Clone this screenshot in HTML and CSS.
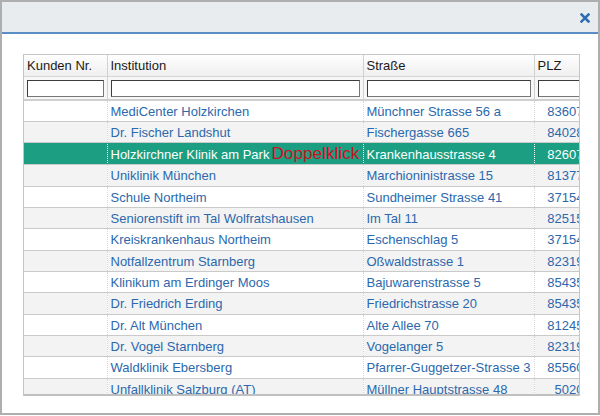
FILE: index.html
```html
<!DOCTYPE html>
<html lang="de">
<head>
<meta charset="utf-8">
<link rel="stylesheet" href="styles.css">
</head>
<body>
<div class="dialog">
  <div class="titlebar">
    <button class="close" aria-label="Schließen">
      <svg width="10" height="10" viewBox="0 0 10 10"><path d="M1.5 1.5L8.5 8.5M8.5 1.5L1.5 8.5" stroke="#2f6db3" stroke-width="2.5" stroke-linecap="square"/></svg>
    </button>
  </div>
  <div class="content">
    <div class="grid">
      <table>
        <colgroup><col class="c1"><col class="c2"><col class="c3"><col class="c4"></colgroup>
        <thead>
          <tr class="head"><th>Kunden Nr.</th><th>Institution</th><th>Straße</th><th>PLZ</th></tr>
          <tr class="filter"><td><input></td><td><input></td><td><input></td><td><input></td></tr>
        </thead>
        <tbody>
          <tr><td></td><td>MediCenter Holzkirchen</td><td>Münchner Strasse 56 a</td><td class="plz">83607</td></tr>
          <tr><td></td><td>Dr. Fischer Landshut</td><td>Fischergasse 665</td><td class="plz">84028</td></tr>
          <tr class="sel"><td></td><td class="inst">Holzkirchner Klinik am Park<span class="hint">Doppelklick</span></td><td>Krankenhausstrasse 4</td><td class="plz">82607</td></tr>
          <tr><td></td><td>Uniklinik München</td><td>Marchioninistrasse 15</td><td class="plz">81377</td></tr>
          <tr><td></td><td>Schule Northeim</td><td>Sundheimer Strasse 41</td><td class="plz">37154</td></tr>
          <tr><td></td><td>Seniorenstift im Tal Wolfratshausen</td><td>Im Tal 11</td><td class="plz">82515</td></tr>
          <tr><td></td><td>Kreiskrankenhaus Northeim</td><td>Eschenschlag 5</td><td class="plz">37154</td></tr>
          <tr><td></td><td>Notfallzentrum Starnberg</td><td>Oßwaldstrasse 1</td><td class="plz">82319</td></tr>
          <tr><td></td><td>Klinikum am Erdinger Moos</td><td>Bajuwarenstrasse 5</td><td class="plz">85435</td></tr>
          <tr><td></td><td>Dr. Friedrich Erding</td><td>Friedrichstrasse 20</td><td class="plz">85435</td></tr>
          <tr><td></td><td>Dr. Alt München</td><td>Alte Allee 70</td><td class="plz">81245</td></tr>
          <tr><td></td><td>Dr. Vogel Starnberg</td><td>Vogelanger 5</td><td class="plz">82319</td></tr>
          <tr><td></td><td>Waldklinik Ebersberg</td><td>Pfarrer-Guggetzer-Strasse 3</td><td class="plz">85560</td></tr>
          <tr><td></td><td>Unfallklinik Salzburg (AT)</td><td>Müllner Hauptstrasse 48</td><td class="plz">5020</td></tr>
        </tbody>
      </table>
    </div>
  </div>
</div>
</body>
</html>
```
FILE: styles.css
```css
html, body {
  margin: 0;
  padding: 0;
  background: #ffffff;
}
body {
  width: 600px;
  height: 416px;
  overflow: hidden;
  font-family: "Liberation Sans", Arial, sans-serif;
}
.dialog {
  box-sizing: border-box;
  width: 600px;
  height: 415px;
  border: 2px solid #aeaeae;
  background: #fff;
}
.titlebar {
  height: 30px;
  background: #e9ecee;
  border-bottom: 2px solid #5a8fc6;
  display: flex;
  justify-content: flex-end;
  align-items: center;
}
.close {
  border: 0;
  background: transparent;
  padding: 0;
  margin: 2px 8px 0 0;
  width: 10px;
  height: 10px;
  display: flex;
}
.content {
  padding: 20px 0 0 21px;
}
.grid {
  width: 555px;
  height: 339px;
  overflow: hidden;
  border: 1px solid #c6c6c6;
  border-bottom: 2px solid #c0c0c0;
}
table {
  table-layout: fixed;
  border-collapse: collapse;
  width: 563px;
  font-size: 13px;
}
.c1 { width: 83px; }
.c2 { width: 256px; }
.c3 { width: 171px; }
.c4 { width: 53px; }
th, td {
  padding: 0 3px;
  white-space: nowrap;
  overflow: hidden;
}
.head th {
  height: 21px;
  text-align: left;
  font-weight: normal;
  color: #1a1a1a;
  background: linear-gradient(#fefefe, #efefef);
  border-right: 1px solid #d2d2d2;
  border-bottom: 1px solid #d6d6d6;
}
.filter td {
  height: 22px;
  padding: 0 3px;
  background: #f7f7f7;
  border-right: 1px solid #d2d2d2;
  border-bottom: 2px solid #cfcfcf;
}
.filter input {
  box-sizing: border-box;
  display: block;
  width: 100%;
  height: 17px;
  margin: 0;
  border: 1px solid #3c3c3c;
  border-right-color: #777;
  border-bottom-color: #777;
  background: #fff;
}
tbody tr {
  height: 21.33px;
}
tbody td {
  color: #2b68ad;
  border-right: 1px dotted #d8d8d8;
  border-bottom: 1px solid #cacaca;
  line-height: 19px;
  padding-top: 1px;
}
tbody tr:nth-child(even) td {
  background: #f3f3f3;
}
tbody tr.sel td {
  background: #1b9e82;
  color: #ffffff;
  border-right-color: #1b9e82;
}
tbody tr.sel td.inst {
  padding-right: 0;
}
.hint {
  color: #d0101c;
  font-size: 17.2px;
  margin-left: 2px;
}
.plz {
  text-align: right;
}
```
